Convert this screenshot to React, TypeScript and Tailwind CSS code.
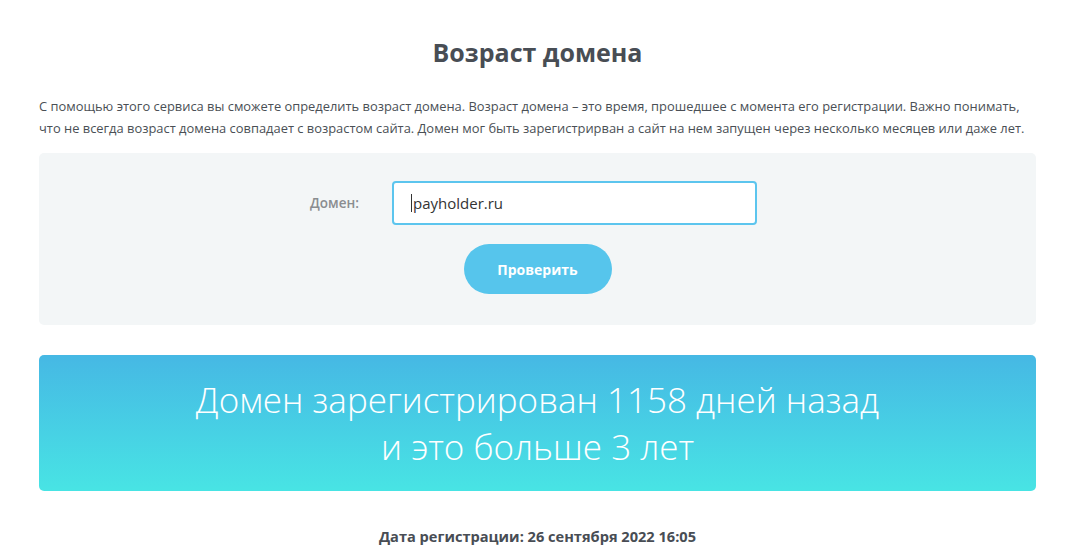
import React from "react";

export default function App() {
  const font = { fontFamily: '"Open Sans", "Noto Sans", sans-serif' };
  return (
    <div className="w-[1066px] h-[555px] bg-white overflow-hidden text-[#4a4f55]" style={font}>
      <div className="mx-[39px] w-[997px]">
        <h1 className="pt-[36px] text-center text-[25px] leading-[32px] font-bold text-[#484d54]">Возраст домена</h1>
        <p className="mt-[27px] text-[12.9px] leading-[22px] text-[#4a4f55]">
          С помощью этого сервиса вы сможете определить возраст домена. Возраст домена – это время, прошедшее с момента его регистрации. Важно понимать, что не всегда возраст домена совпадает с возрастом сайта. Домен мог быть зарегистрирван а сайт на нем запущен через несколько месяцев или даже лет.
        </p>
        <div className="mt-[14px] h-[172px] rounded-[5px] bg-[#f3f6f7] flex flex-col items-center pt-[28px]">
          <div className="flex items-center mr-[8px]">
            <label className="w-[82px] text-[13.5px] font-semibold text-[#8a8d90]">Домен:</label>
            <div className="w-[365px] h-[44px] rounded-[4px] border-2 border-[#5cc5ee] bg-white flex items-center pl-[17px] text-[15px] text-[#333]">
              <span className="w-px h-[18px] bg-[#333] mr-[1px]" />payholder.ru
            </div>
          </div>
          <button className="mt-[19px] w-[148px] h-[50px] rounded-full bg-[#56c5ec] text-white text-[14px] font-bold">Проверить</button>
        </div>
        <div className="mt-[30px] h-[136px] rounded-[5px] bg-gradient-to-b from-[#46b8e4] to-[#48e4e4] flex flex-col items-center justify-center text-white text-[35px] leading-[47px] font-light">
          <div>Домен зарегистрирован 1158 дней назад</div>
          <div>и это больше 3 лет</div>
        </div>
        <div className="mt-[35px] text-center text-[14.6px] font-bold text-[#484d54]">Дата регистрации: 26 сентября 2022 16:05</div>
      </div>
    </div>
  );
}
